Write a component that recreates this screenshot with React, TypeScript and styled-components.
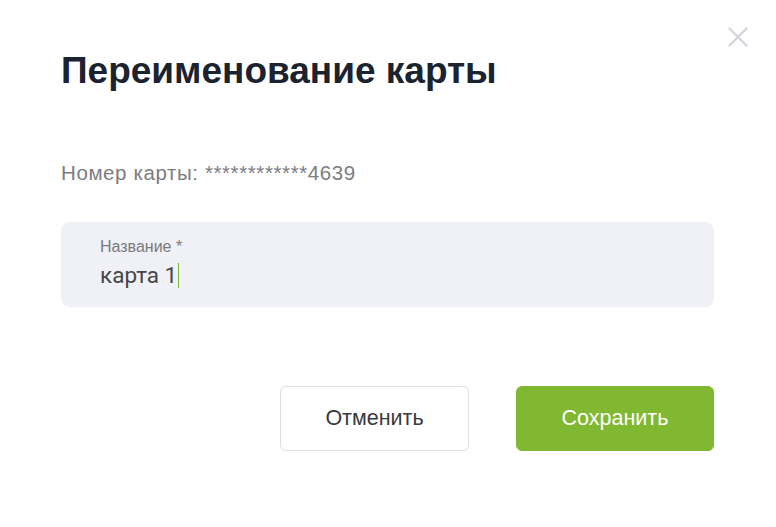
import React from "react";
import styled, { createGlobalStyle } from "styled-components";

const Global = createGlobalStyle`
  html, body { margin: 0; padding: 0; background: #ffffff; }
  body { font-family: "Liberation Sans", Arial, sans-serif; }
  * { box-sizing: border-box; }
`;

const Modal = styled.div`
  position: relative;
  width: 776px;
  height: 527px;
  background: #fff;
  padding: 48px 62px 0 61px;
  display: flex;
  flex-direction: column;
`;

const Close = styled.button`
  position: absolute;
  top: 26px;
  right: 27px;
  width: 22px;
  height: 22px;
  padding: 0;
  border: none;
  background: none;
  cursor: pointer;
  display: flex;
  align-items: center;
  justify-content: center;
`;

const Title = styled.h1`
  margin: 0;
  font-size: 37px;
  line-height: 46px;
  font-weight: 700;
  color: #1b2230;
`;

const CardNumber = styled.div`
  margin-top: 67px;
  font-size: 20.5px;
  line-height: 24px;
  letter-spacing: 0.6px;
  color: #7c7c82;
`;

const Field = styled.label`
  margin-top: 37px;
  height: 85px;
  background: #f0f1f6;
  border-radius: 9px;
  padding: 15px 39px 0;
  display: flex;
  flex-direction: column;
`;

const FieldLabel = styled.span`
  font-size: 16px;
  line-height: 20px;
  color: #7a7a80;
`;

const FieldValue = styled.span`
  margin-top: 4px;
  font-family: Roboto, "Liberation Sans", sans-serif;
  font-size: 22.5px;
  line-height: 28px;
  color: #45454a;
  display: flex;
  align-items: center;
`;

const Caret = styled.span`
  display: inline-block;
  width: 1px;
  height: 25px;
  background: #7ab530;
  margin-left: 1px;
`;

const Actions = styled.div`
  margin-top: 79px;
  display: flex;
  justify-content: flex-end;
  gap: 47px;
`;

const Button = styled.button<{ $primary?: boolean; $w: number }>`
  width: ${(p) => p.$w}px;
  height: 65px;
  border-radius: 6px;
  font-family: "Liberation Sans", Arial, sans-serif;
  font-size: 21.5px;
  cursor: pointer;
  border: 1px solid ${(p) => (p.$primary ? "#80b931" : "#dcdfe7")};
  background: ${(p) => (p.$primary ? "#80b931" : "#ffffff")};
  color: ${(p) => (p.$primary ? "#ffffff" : "#3a3a3e")};
`;

export default function App() {
  return (
    <>
      <Global />
      <Modal>
        <Close aria-label="Закрыть">
          <svg width="20" height="20" viewBox="0 0 20 20">
            <path d="M1.5 1.5 L18.5 18.5 M18.5 1.5 L1.5 18.5" stroke="#d2d6de" strokeWidth="2.4" strokeLinecap="round" />
          </svg>
        </Close>
        <Title>Переименование карты</Title>
        <CardNumber>Номер карты: ************4639</CardNumber>
        <Field>
          <FieldLabel>Название *</FieldLabel>
          <FieldValue>
            карта 1<Caret />
          </FieldValue>
        </Field>
        <Actions>
          <Button $w={189}>Отменить</Button>
          <Button $primary $w={198}>Сохранить</Button>
        </Actions>
      </Modal>
    </>
  );
}
